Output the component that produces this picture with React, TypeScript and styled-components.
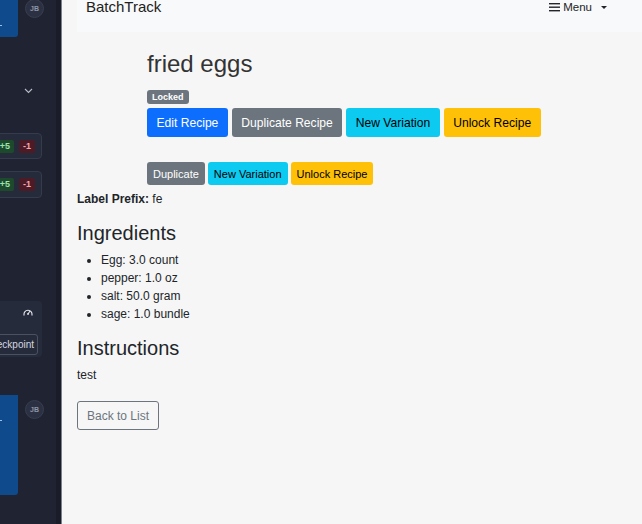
import React from 'react';
import styled, { createGlobalStyle } from 'styled-components';

const GlobalStyle = createGlobalStyle`
  html, body {
    margin: 0;
    padding: 0;
    height: 100%;
    overflow: hidden;
  }
  body {
    font-family: "Liberation Sans", Arial, sans-serif;
    color: #212529;
    background: #f6f6f6;
  }
`;

const Shell = styled.div`
  display: flex;
  width: 642px;
  height: 524px;
  overflow: hidden;
`;

/* sidebar (mostly scrolled out of view) */
const Sidebar = styled.aside`
  width: 56px;
  flex-shrink: 0;
  background: #1f2332;
  overflow: hidden;
  display: flex;
  flex-direction: column;
`;

const SideEdge = styled.div`
  width: 5px;
  flex-shrink: 0;
  background: #1a1d29;
  border-right: 1px solid #7b808b;
`;

const ChatRow = styled.div<{ $top: number; $h: number }>`
  display: flex;
  align-items: flex-start;
  gap: 7px;
  margin-top: ${p => p.$top}px;
  height: ${p => p.$h}px;
`;

const Bubble = styled.div<{ $h: number }>`
  width: 18px;
  height: ${p => p.$h}px;
  background: #0f4a8c;
  border-radius: 0 0 3px 0;
  position: relative;
  &::after {
    content: '';
    position: absolute;
    left: 0;
    top: ${p => Math.min(25, p.$h - 12)}px;
    width: 2px;
    height: 1px;
    background: #9fc0e8;
  }
`;

const Avatar = styled.div<{ $top?: number }>`
  width: 17px;
  height: 17px;
  border-radius: 50%;
  background: #2b3142;
  border: 1px solid #383e50;
  color: #8f95a6;
  font-size: 7px;
  font-weight: bold;
  display: flex;
  align-items: center;
  justify-content: center;
  margin-top: ${p => p.$top ?? -1}px;
`;

const Chevron = styled.div`
  margin: 51px 0 0 24px;
  height: 8px;
  display: flex;
`;

const SideCard = styled.div<{ $top: number; $h: number }>`
  margin: ${p => p.$top}px 0 0 -10px;
  width: 52px;
  height: ${p => p.$h}px;
  box-sizing: border-box;
  background: #262b3b;
  border: 1px solid #353b4c;
  border-radius: 4px;
  display: flex;
  align-items: center;
  justify-content: flex-end;
  gap: 5px;
  padding-right: 6px;
`;

const Delta = styled.span<{ $up?: boolean }>`
  font-size: 9px;
  font-weight: bold;
  padding: 2px 4px;
  border-radius: 2px;
  line-height: 9px;
  background: ${p => (p.$up ? '#1d4a2d' : '#4c1b26')};
  color: ${p => (p.$up ? '#9be3ad' : '#f2a7b0')};
`;

const CheckCard = styled.div`
  margin: 103px 0 0 -10px;
  width: 52px;
  height: 56px;
  box-sizing: border-box;
  background: #262b3b;
  border-radius: 4px;
  display: flex;
  flex-direction: column;
  align-items: flex-end;
  padding: 7px 0 0 0;
`;

const Gauge = styled.div`
  margin-right: 9px;
  height: 10px;
  display: flex;
`;

const CheckButton = styled.div`
  margin-top: 16px;
  margin-right: 4px;
  height: 21px;
  box-sizing: border-box;
  border: 1px solid #4b5163;
  border-radius: 3px;
  color: #d5d8e0;
  font-size: 10px;
  line-height: 19px;
  padding: 0 3px;
  white-space: nowrap;
  display: flex;
  justify-content: flex-end;
  width: 48px;
  overflow: hidden;
`;

/* main */
const Main = styled.main`
  flex: 1;
  background: #f6f6f6;
  padding-left: 15px;
  display: flex;
  flex-direction: column;
  min-width: 0;
`;

const NavBar = styled.nav`
  height: 32px;
  background: #f8f9fa;
  display: flex;
  justify-content: space-between;
  align-items: flex-start;
  padding: 0 35px 0 9px;
`;

const Brand = styled.span`
  font-size: 15px;
  line-height: 15px;
  margin-top: -1px;
  color: #222;
`;

const MenuToggle = styled.span`
  display: flex;
  align-items: center;
  font-size: 11.5px;
  line-height: 14px;
  color: #212529;
  gap: 3px;
`;

const Caret = styled.span`
  margin-left: 6px;
  width: 0;
  height: 0;
  border-left: 3px solid transparent;
  border-right: 3px solid transparent;
  border-top: 3px solid #212529;
`;

const RecipeHead = styled.section`
  padding-left: 70px;
  display: flex;
  flex-direction: column;
  align-items: flex-start;
`;

const Title = styled.h2`
  margin: 17px 0 0;
  font-size: 24px;
  font-weight: 400;
  line-height: 29px;
  color: #333;
`;

const Badge = styled.span`
  margin-top: 12px;
  background: #6c757d;
  color: #fff;
  font-size: 9px;
  font-weight: bold;
  line-height: 14px;
  height: 14px;
  padding: 0 5px;
  border-radius: 3px;
`;

const ButtonRow = styled.div<{ $gap: number; $top: number }>`
  display: flex;
  gap: ${p => p.$gap}px;
  margin-top: ${p => p.$top}px;
`;

const variants = {
  primary: { bg: '#0d6efd', fg: '#fff' },
  secondary: { bg: '#6c757d', fg: '#fff' },
  info: { bg: '#0dcaf0', fg: '#000' },
  warning: { bg: '#ffc107', fg: '#000' },
};

type Variant = keyof typeof variants;

const Btn = styled.button<{ $v: Variant; $small?: boolean }>`
  font-family: inherit;
  border: none;
  border-radius: 3px;
  cursor: pointer;
  background: ${p => variants[p.$v].bg};
  color: ${p => variants[p.$v].fg};
  height: ${p => (p.$small ? 23 : 29)}px;
  font-size: ${p => (p.$small ? 11 : 12.1)}px;
  padding: ${p => (p.$small ? '0 6px' : '0 9.5px')};
`;

const Prefix = styled.p`
  margin: 6px 0 0;
  font-size: 12px;
  line-height: 16px;
  & b {
    font-weight: bold;
  }
`;

const SectionTitle = styled.h3<{ $top: number }>`
  margin: ${p => p.$top}px 0 0;
  font-size: 20px;
  font-weight: 400;
  line-height: 24px;
  color: #212529;
`;

const List = styled.ul`
  margin: 6px 0 0;
  padding-left: 24px;
  font-size: 12px;
  line-height: 18px;
`;

const Text = styled.p`
  margin: 7px 0 0;
  font-size: 12px;
  line-height: 16px;
`;

const OutlineBtn = styled.button`
  margin-top: 18px;
  align-self: flex-start;
  font-family: inherit;
  background: transparent;
  border: 1px solid #6c757d;
  color: #6c757d;
  border-radius: 3px;
  height: 29px;
  padding: 0 9px;
  font-size: 12px;
`;

const ingredients = ['Egg: 3.0 count', 'pepper: 1.0 oz', 'salt: 50.0 gram', 'sage: 1.0 bundle'];

const App: React.FC = () => {
  return (
    <>
      <GlobalStyle />
      <Shell>
        <Sidebar>
          <ChatRow $top={0} $h={37}>
            <Bubble $h={37} />
            <Avatar>JB</Avatar>
          </ChatRow>
          <Chevron>
            <svg width="9" height="6" viewBox="0 0 9 6">
              <path d="M1 1l3.5 3.5L8 1" fill="none" stroke="#b8bdc8" strokeWidth="1.1" />
            </svg>
          </Chevron>
          <SideCard $top={37} $h={26}>
            <Delta $up>+5</Delta>
            <Delta>-1</Delta>
          </SideCard>
          <SideCard $top={12} $h={27}>
            <Delta $up>+5</Delta>
            <Delta>-1</Delta>
          </SideCard>
          <CheckCard>
            <Gauge>
              <svg width="10" height="9" viewBox="0 0 10 9">
                <path d="M1.2 7.5A4 4 0 1 1 8.8 7.5" fill="none" stroke="#e4e6ec" strokeWidth="1.1" />
                <path d="M5 6L7 3" stroke="#e4e6ec" strokeWidth="1.1" />
                <circle cx="5" cy="6" r="0.9" fill="#e4e6ec" />
              </svg>
            </Gauge>
            <CheckButton>Checkpoint</CheckButton>
          </CheckCard>
          <ChatRow $top={38} $h={100}>
            <Bubble $h={100} />
            <Avatar $top={5}>JB</Avatar>
          </ChatRow>
        </Sidebar>
        <SideEdge />
        <Main>
          <NavBar>
            <Brand>BatchTrack</Brand>
            <MenuToggle>
              <svg width="11" height="10" viewBox="0 0 11 10">
                <rect x="0" y="1" width="11" height="1.4" fill="#212529" />
                <rect x="0" y="4.5" width="11" height="1.4" fill="#212529" />
                <rect x="0" y="8" width="11" height="1.4" fill="#212529" />
              </svg>
              Menu
              <Caret />
            </MenuToggle>
          </NavBar>
          <RecipeHead>
            <Title>fried eggs</Title>
            <Badge>Locked</Badge>
            <ButtonRow $gap={4} $top={4}>
              <Btn $v="primary">Edit Recipe</Btn>
              <Btn $v="secondary">Duplicate Recipe</Btn>
              <Btn $v="info">New Variation</Btn>
              <Btn $v="warning">Unlock Recipe</Btn>
            </ButtonRow>
            <ButtonRow $gap={3} $top={25}>
              <Btn $v="secondary" $small>Duplicate</Btn>
              <Btn $v="info" $small>New Variation</Btn>
              <Btn $v="warning" $small>Unlock Recipe</Btn>
            </ButtonRow>
          </RecipeHead>
          <Prefix>
            <b>Label Prefix:</b> fe
          </Prefix>
          <SectionTitle $top={14}>Ingredients</SectionTitle>
          <List>
            {ingredients.map(i => (
              <li key={i}>{i}</li>
            ))}
          </List>
          <SectionTitle $top={13}>Instructions</SectionTitle>
          <Text>test</Text>
          <OutlineBtn>Back to List</OutlineBtn>
        </Main>
      </Shell>
    </>
  );
};

export default App;
